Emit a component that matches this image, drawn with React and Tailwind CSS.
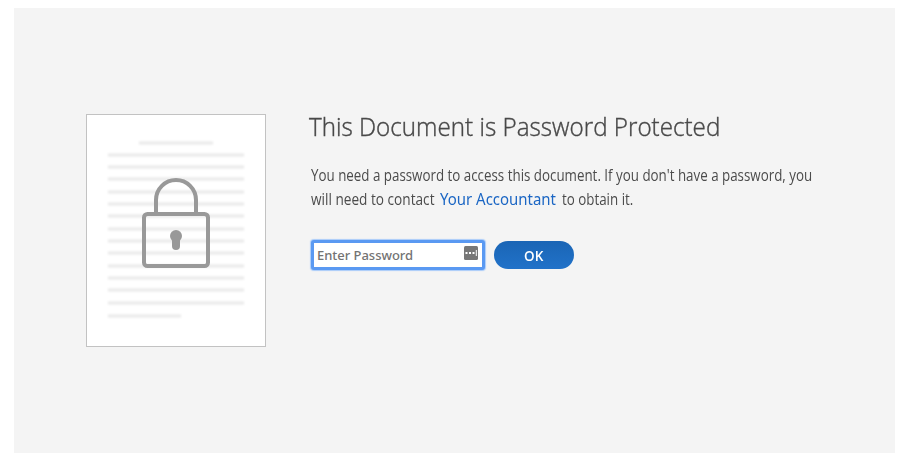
import React from "react";

const lineTops = [41, 53, 65, 78, 90, 102, 115, 127, 139, 152, 164, 176, 189];

function DocumentPicture() {
  return (
    <svg className="h-[233px] w-[180px] shrink-0" viewBox="0 0 180 233" fill="none">
      <defs>
        <filter id="soft" x="0" y="0" width="180" height="233" filterUnits="userSpaceOnUse">
          <feGaussianBlur stdDeviation="0.8" />
        </filter>
      </defs>
      <rect x="0.5" y="0.5" width="179" height="232" fill="#fff" stroke="#c2c2c2" />
      <g filter="url(#soft)" stroke="#e9e9e9" strokeWidth="3">
        <path d="M53 29H127" />
        {lineTops.map((y) => (
          <path key={y} d={`M22 ${y}H158`} />
        ))}
        <path d="M22 202H95" />
      </g>
      <path d="M70 99V86a20 20 0 0 1 40 0V99" stroke="#999" strokeWidth="4" />
      <rect x="58" y="100" width="64" height="52" rx="3.5" stroke="#999" strokeWidth="4" />
      <circle cx="90" cy="122" r="6" fill="#999" />
      <path d="M90 124V132" stroke="#999" strokeWidth="8" strokeLinecap="round" />
    </svg>
  );
}

export default function App() {
  return (
    <div className="h-[461px] w-[909px] overflow-hidden bg-white px-[14px] py-2 font-['Open_Sans',sans-serif] text-[#4b4b4b]">
      <main className="flex h-[445px] w-[881px] items-start bg-[#f4f4f4] pl-[72px] pt-[106px]">
        <DocumentPicture />
        <section className="ml-[45px] w-[510px]">
          <h1 className="-ml-[2px] -mt-[6px] h-9 origin-left scale-x-[0.931] whitespace-nowrap text-[26px] font-light leading-9 text-[#484848] [-webkit-text-stroke:0.4px_#484848]">
            This Document is Password Protected
          </h1>
          <div className="mt-[19px] text-[16px] leading-6">
            <p className="origin-left scale-x-[0.834] whitespace-nowrap">
              You need a password to access this document. If you don't have a password, you
            </p>
            <p className="flex whitespace-nowrap">
              <span className="w-[129px]">
                <span className="block origin-left scale-x-[0.852]">will need to contact</span>
              </span>
              <a className="w-[122px] font-['Noto_Sans',sans-serif] text-[#1b66c4]">
                <span className="block origin-left scale-x-[0.935]">Your Accountant</span>
              </a>
              <span className="block origin-left scale-x-[0.834]">to obtain it.</span>
            </p>
          </div>
          <form className="mt-[29px] flex items-center">
            <div className="flex h-[30px] w-[174px] items-center justify-between rounded-[3px] border-[3px] border-[#5a99f2] bg-white pl-[3px] pr-1 shadow-[0_0_1px_1px_#a9cbfa]">
              <span className="mt-px origin-left whitespace-nowrap font-['Noto_Sans',sans-serif] text-[13px] font-medium tracking-[-0.03px] text-[#737373]">
                Enter Password
              </span>
              <svg className="-mt-1 h-[14px] w-[14px] shrink-0" viewBox="0 0 14 14" fill="none">
                <rect width="14" height="14" rx="1.5" fill="#777" />
                <path d="M1.5 7h2M5 7h2M8.5 7h2" stroke="#fff" strokeWidth="2" />
                <path d="M12.3 4v6" stroke="#fff" strokeWidth="1" />
              </svg>
            </div>
            <button
              type="button"
              className="ml-[9px] flex h-7 w-20 items-center justify-center rounded-full bg-linear-to-b from-[#1a65b5] to-[#2172c9] text-[15px] font-semibold text-white"
            >
              <span className="block scale-x-[0.9]">OK</span>
            </button>
          </form>
        </section>
      </main>
    </div>
  );
}
